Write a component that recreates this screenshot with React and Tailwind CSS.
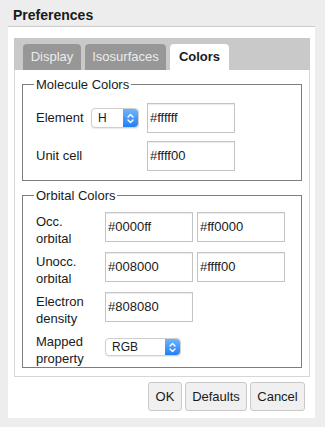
function Stepper() {
  return (
    <div className="flex h-full w-[15px] items-center justify-center rounded-r-[4px] bg-gradient-to-b from-[#6db4fb] to-[#1f7ff5]">
      <svg width="7" height="11" viewBox="0 0 7 11" fill="none" stroke="#fff" strokeWidth="1.4" strokeLinecap="round" strokeLinejoin="round">
        <polyline points="1,4 3.5,1.5 6,4" />
        <polyline points="1,7 3.5,9.5 6,7" />
      </svg>
    </div>
  )
}

function Select({ value, w, h }) {
  return (
    <div className={`flex ${w} ${h} items-stretch rounded-[4px] border border-[#cfcfcf] bg-white shadow-[0_1px_1px_rgba(0,0,0,0.08)]`}>
      <span className="flex flex-1 items-center pl-[6px] text-[12px]">{value}</span>
      <Stepper />
    </div>
  )
}

function Field({ value }) {
  return (
    <div className="flex h-[30px] w-[88px] items-center border border-[#c4c4c4] bg-white pl-[2px] text-[13px] shadow-[inset_0_1px_1px_rgba(0,0,0,0.08)]">
      {value}
    </div>
  )
}

function Row({ label, children }) {
  return (
    <div className="flex h-[40px] items-center">
      <div className="w-[69px] pt-[6px] leading-[17px]">{label}</div>
      <div className="flex gap-1">{children}</div>
    </div>
  )
}

export default function App() {
  const tabs = [
    { name: 'Display', w: 'w-[58px]', active: false },
    { name: 'Isosurfaces', w: 'w-[81px]', active: false },
    { name: 'Colors', w: 'w-[59px]', active: true },
  ]

  return (
    <div className="flex h-[427px] w-[325px] flex-col bg-[#ededed] pb-[9px] pl-2 pr-[10px] font-['Liberation_Sans',Arial,sans-serif] text-[13px] text-[#1a1a1a]">
      <div className="h-[27px] border-b border-[#cbcbcb] px-[5px] pt-[5px] text-[14px] font-bold">Preferences</div>

      <div className="flex flex-1 flex-col bg-white pb-[7px] pl-[6px] pr-[5px] pt-[11px]">
        <div className="flex h-[339px] flex-col">
          <div className="flex h-[32px] items-end gap-1 bg-[#c9c9c9] pl-[9px]">
            {tabs.map((t) => (
              <div
                key={t.name}
                className={`flex h-[26px] ${t.w} items-center justify-center rounded-t-[4px] ${t.active ? 'bg-white font-bold text-[#1a1a1a]' : 'bg-[#979797] text-[#ececec]'}`}
              >
                {t.name}
              </div>
            ))}
          </div>

          <div className="flex-1 overflow-hidden border border-t-0 border-[#d6d6d6] px-[7px]">
            <fieldset className="mt-[7px] border border-[#7d7d7d] pb-[9px] pl-[13px]">
              <legend className="-ml-[2px] px-[2px] leading-[15px]">Molecule Colors</legend>
              <div className="mt-[11px] flex items-center">
                <div className="w-[55px]">Element</div>
                <Select value="H" w="w-[48px]" h="h-[20px]" />
                <div className="ml-[8px]">
                  <Field value="#ffffff" />
                </div>
              </div>
              <div className="mt-[8px] flex items-center">
                <div className="w-[111px]">Unit cell</div>
                <Field value="#ffff00" />
              </div>
            </fieldset>

            <fieldset className="mt-[7px] border border-[#7d7d7d] pl-[13px]">
              <legend className="-ml-[2px] px-[2px] leading-[15px]">Orbital Colors</legend>
              <div className="mt-[4px]">
                <Row label={<>Occ.<br />orbital</>}>
                  <Field value="#0000ff" />
                  <Field value="#ff0000" />
                </Row>
                <Row label={<>Unocc.<br />orbital</>}>
                  <Field value="#008000" />
                  <Field value="#ffff00" />
                </Row>
                <Row label={<>Electron<br />density</>}>
                  <Field value="#808080" />
                </Row>
                <Row label={<>Mapped<br />property</>}>
                  <Select value="RGB" w="w-[76px]" h="h-[18px]" />
                </Row>
              </div>
            </fieldset>
          </div>
        </div>

        <div className="mt-[5px] flex justify-end gap-[3px] pr-[5px]">
          {[
            ['OK', 'w-[34px]'],
            ['Defaults', 'w-[62px]'],
            ['Cancel', 'w-[55px]'],
          ].map(([label, w]) => (
            <div key={label} className={`flex h-[29px] ${w} items-center justify-center rounded-[3px] border border-[#c9c9c9] bg-[#f0f0f0]`}>
              {label}
            </div>
          ))}
        </div>
      </div>
    </div>
  )
}
